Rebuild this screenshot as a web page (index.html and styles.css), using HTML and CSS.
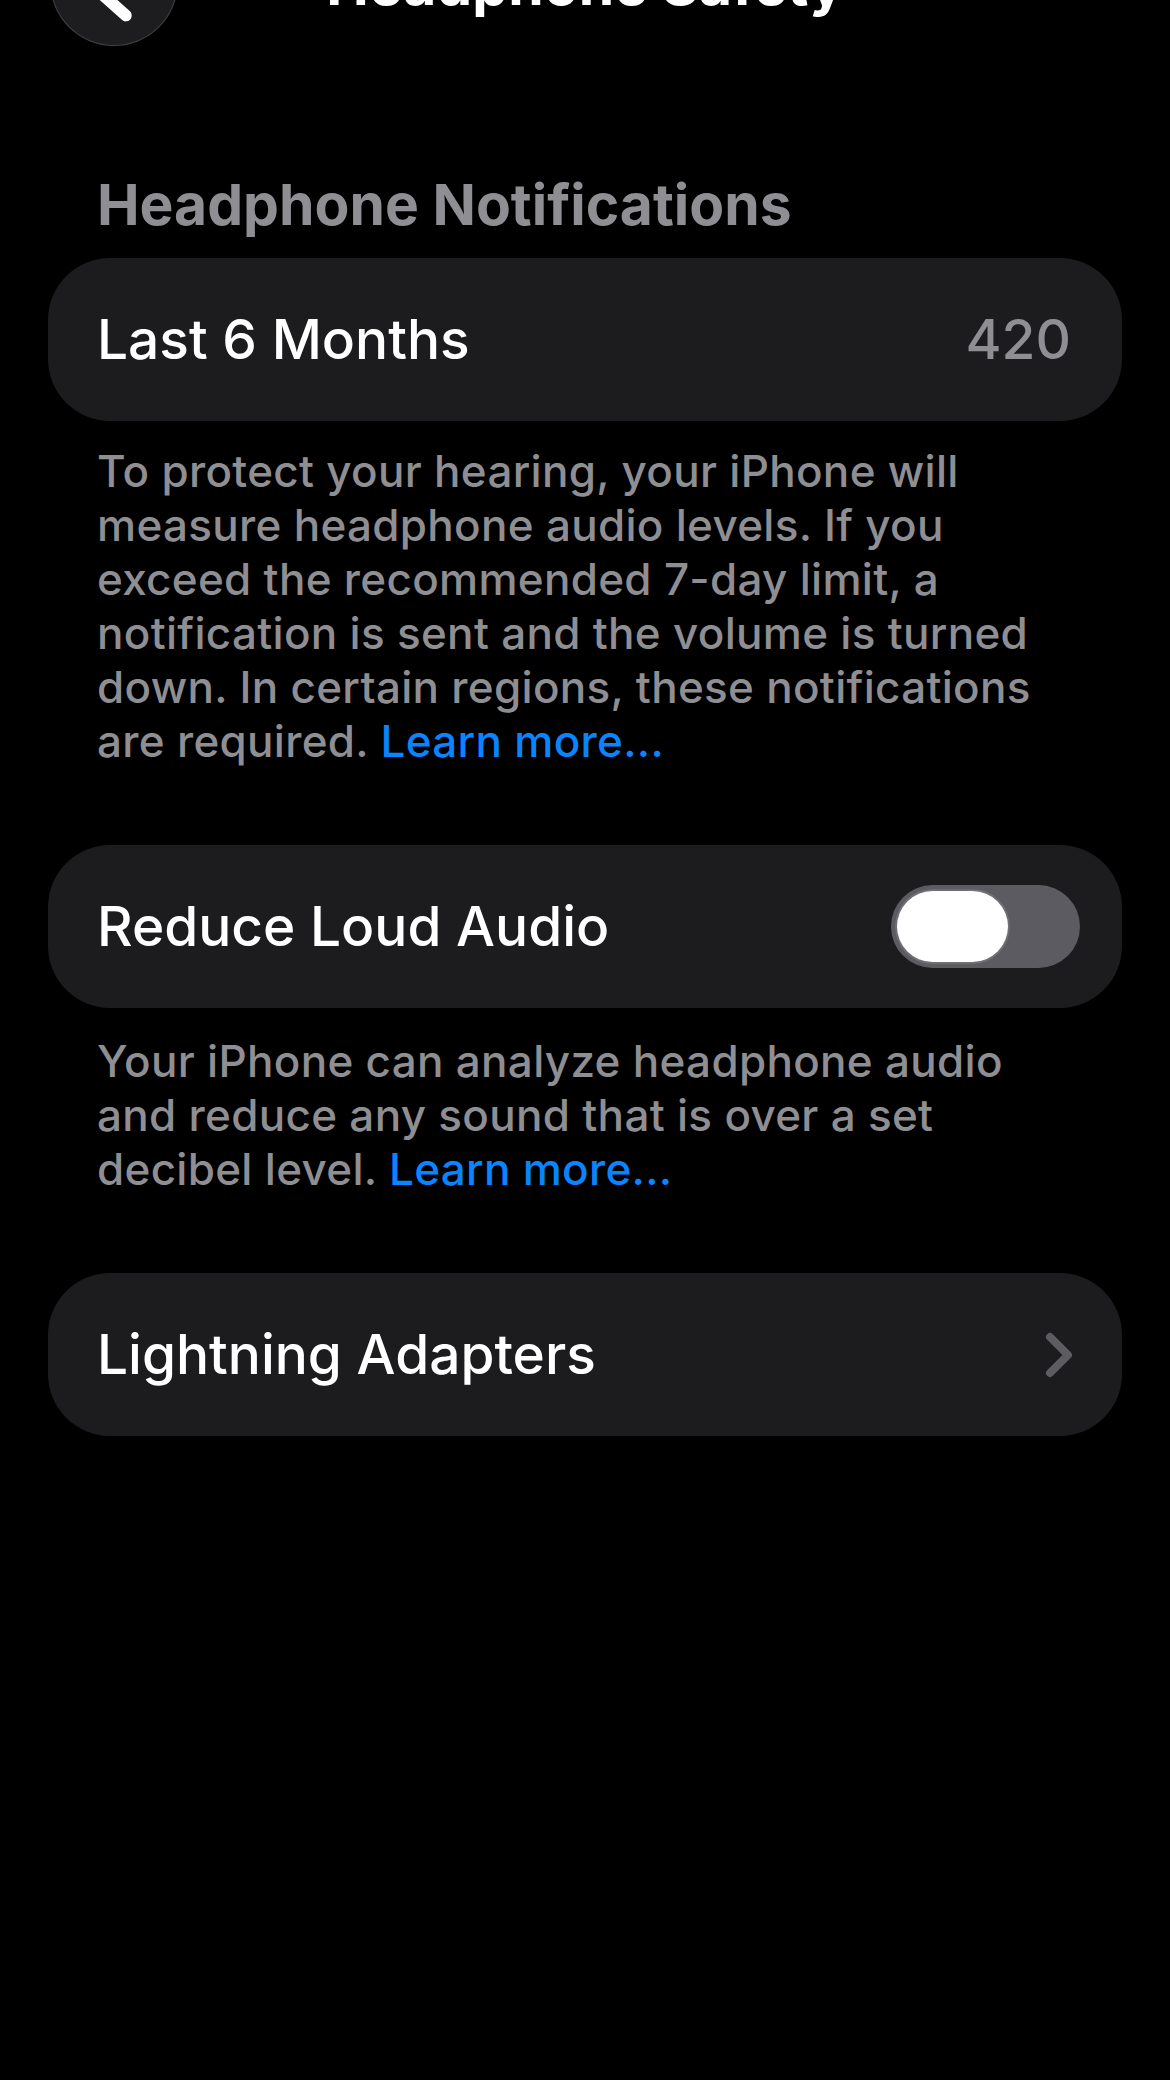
FILE: index.html
```html
<!DOCTYPE html>
<html lang="en">
<head>
    <meta charset="UTF-8">
    <meta name="viewport" content="width=device-width, initial-scale=1.0">
    <title>Headphone Safety</title>
    <link rel="stylesheet" href="styles.css">
</head>
<body>

    <header class="nav">
        <button class="back-btn" aria-label="Back">
            <svg viewBox="0 0 128 128" width="128" height="128">
                <polyline points="76,30 38,64 76,98" fill="none" stroke="#fff" stroke-width="12" stroke-linecap="round" stroke-linejoin="round"/>
            </svg>
        </button>
        <h1 class="nav-title">Headphone Safety</h1>
        <div class="nav-spacer"></div>
    </header>

    <main class="content">
        <h2 class="section-title">Headphone Notifications</h2>
        <div class="cell">
            <span class="cell-label">Last 6 Months</span>
            <span class="cell-value">420</span>
        </div>
        <p class="footnote">
            To protect your hearing, your iPhone will<br>
            measure headphone audio levels. If you<br>
            exceed the recommended 7-day limit, a<br>
            notification is sent and the volume is turned<br>
            down. In certain regions, these notifications<br>
            are required. <a href="#" class="link">Learn more...</a>
        </p>

        <div class="cell cell-toggle">
            <span class="cell-label">Reduce Loud Audio</span>
            <span class="switch"><span class="switch-knob"></span></span>
        </div>
        <p class="footnote">
            Your iPhone can analyze headphone audio<br>
            and reduce any sound that is over a set<br>
            decibel level. <a href="#" class="link">Learn more...</a>
        </p>

        <div class="cell cell-link">
            <span class="cell-label">Lightning Adapters</span>
            <svg class="chevron" viewBox="0 0 32 48" width="32" height="48">
                <polyline points="7,6 25,24 7,42" fill="none" stroke="#5c5c61" stroke-width="8" stroke-linecap="round" stroke-linejoin="round"/>
            </svg>
        </div>
    </main>

</body>
</html>
```

FILE: styles.css
```css
/* --- page --- */
body {
    margin: 0;
    background-color: #000000;
    color: #ffffff;
    font-family: Inter, "Noto Sans", "Liberation Sans", sans-serif;
    min-height: 100vh;
    overflow: hidden;
}

/* --- navigation bar (scrolled, partly off screen) --- */
.nav {
    display: grid;
    grid-template-columns: 178px 1fr 178px;
    align-items: start;
    margin-top: -82px;
    height: 129px;
}

.back-btn {
    margin-left: 50px;
    width: 128px;
    height: 128px;
    padding: 0;
    border-radius: 50%;
    background-color: #1d1d1f;
    border: 1.5px solid rgba(255, 255, 255, 0.16);
    box-sizing: border-box;
    display: flex;
    align-items: center;
    justify-content: center;
}

.back-btn svg {
    display: block;
}

.nav-title {
    margin: 38px 0 0;
    text-align: center;
    font-size: 57px;
    line-height: 1;
    font-weight: 700;
    color: #ffffff;
}

/* --- content --- */
.content {
    padding: 129px 48px 0;
}

.section-title {
    margin: 0 0 0 49px;
    font-size: 57px;
    line-height: 1;
    font-weight: 700;
    color: #8e8e93;
}

.cell {
    display: flex;
    align-items: center;
    justify-content: space-between;
    height: 163px;
    padding: 0 51px 0 49px;
    background-color: #1c1c1e;
    border-radius: 62px;
    box-sizing: border-box;
}

.section-title + .cell {
    margin-top: 25px;
}

.cell-label {
    font-size: 55px;
    line-height: 1;
    font-weight: 500;
    color: #ffffff;
}

.cell-value {
    font-size: 55px;
    line-height: 1;
    font-weight: 500;
    color: #8e8e93;
}

.footnote {
    margin: 23px 0 77px 49px;
    font-size: 44px;
    line-height: 54px;
    font-weight: 500;
    letter-spacing: 0.3px;
    color: #8e8e93;
    white-space: nowrap;
}

.footnote + .cell-toggle + .footnote {
    margin-top: 26px;
}

.link {
    color: #0a84ff;
    text-decoration: none;
}

/* --- switch (off) --- */
.cell-toggle {
    padding-right: 42px;
}

.switch {
    display: flex;
    align-items: center;
    width: 189px;
    height: 83px;
    padding: 0 6px;
    background-color: #5c5b61;
    border-radius: 42px;
    box-sizing: border-box;
}

.switch-knob {
    width: 111px;
    height: 71px;
    background-color: #ffffff;
    border-radius: 36px;
    box-shadow: 0 0 0 2px rgba(255, 255, 255, 0.12);
}

/* --- chevron row --- */
.cell-link {
    padding-right: 47px;
}

.chevron {
    display: block;
}
```
